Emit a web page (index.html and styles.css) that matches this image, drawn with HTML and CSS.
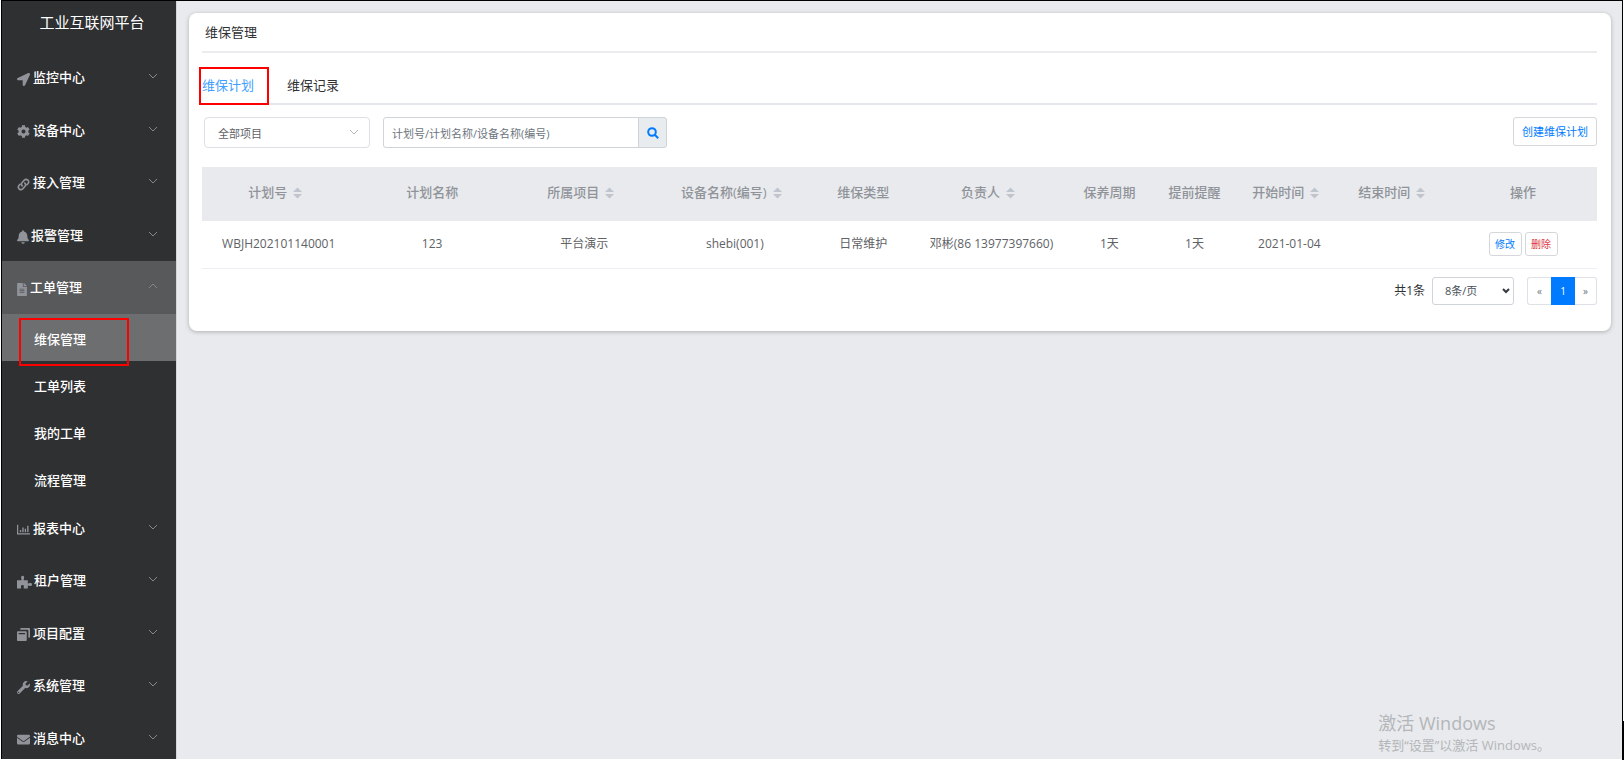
FILE: index.html
```html
<!DOCTYPE html>
<html lang="zh-CN">
<head>
<meta charset="utf-8">
<title>工业互联网平台</title>
<link rel="stylesheet" href="styles.css">
</head>
<body>
<svg class="defs" aria-hidden="true">
  <symbol id="chev" viewBox="0 0 10 6"><path d="M1 1l4 4 4-4" fill="none" stroke="currentColor"/></symbol>
  <symbol id="sort" viewBox="0 0 10 12"><path d="M5 0l5 5H0zM5 12l5-5H0z"/></symbol>
</svg>
<div class="app">
  <aside class="sidebar">
    <h1 class="brand">工业互联网平台</h1>
    <ul class="menu">
      <li class="item"><a class="link" href="#"><svg class="ico" viewBox="0 0 512 512"><path d="M445 4L29 195c-48 23-32 93 19 93h176v176c0 51 71 67 93 19L509 67c16-38-26-80-64-63z"/></svg>监控中心<svg class="chev"><use href="#chev"/></svg></a></li>
      <li class="item"><a class="link" href="#"><svg class="ico" viewBox="0 0 512 512"><path fill-rule="evenodd" d="M487 316l-42-25a192 192 0 0 0 0-70l42-25c5-3 7-9 6-14a248 248 0 0 0-55-95c-4-4-10-5-15-2l-43 24a190 190 0 0 0-61-35V25c0-6-4-11-9-12a251 251 0 0 0-110 0c-6 1-9 6-9 12v49a196 196 0 0 0-61 35L87 85c-5-3-11-2-15 2a247 247 0 0 0-55 95c-2 5 0 11 5 14l43 25a192 192 0 0 0 0 70l-43 25c-5 3-7 9-5 14 11 36 30 68 55 95 4 4 10 5 15 2l43-24a190 190 0 0 0 61 35v49c0 6 3 11 9 12 35 8 73 8 110 0 5-1 9-6 9-12v-49a196 196 0 0 0 61-35l43 24c5 3 11 2 15-2 25-27 44-60 55-95 1-5-1-11-6-14zM256 336a80 80 0 1 1 0-160 80 80 0 0 1 0 160z"/></svg>设备中心<svg class="chev"><use href="#chev"/></svg></a></li>
      <li class="item"><a class="link" href="#"><svg class="ico" viewBox="0 0 512 512"><g fill="none" stroke="currentColor" stroke-width="64" stroke-linecap="round"><path d="M206 312c-44-40-44-96-4-136l86-92c38-38 100-38 140 2s36 98 0 138l-40 42"/><path d="M306 200c44 40 44 96 4 136l-86 92c-38 38-100 38-140-2s-36-98 0-138l40-42"/></g></svg>接入管理<svg class="chev"><use href="#chev"/></svg></a></li>
      <li class="item"><a class="link" href="#"><svg class="ico narrow" viewBox="0 0 448 512"><path d="M224 512a64 64 0 0 0 64-64H160a64 64 0 0 0 64 64zm215-150c-19-20-55-52-55-154 0-78-54-140-128-155V32a32 32 0 1 0-64 0v21C118 68 64 130 64 208c0 102-36 134-55 154a31 31 0 0 0-9 22c0 16 13 32 32 32h384c19 0 32-16 32-32a31 31 0 0 0-9-22z"/></svg>报警管理<svg class="chev"><use href="#chev"/></svg></a></li>
      <li class="item open"><a class="link" href="#"><svg class="ico file" viewBox="0 0 384 512"><path fill-rule="evenodd" d="M224 136V0H24C11 0 0 11 0 24v464c0 13 11 24 24 24h336c13 0 24-11 24-24V160H248c-13 0-24-11-24-24zm64 248H96v-32h192zm0-64H96v-32h192zm0-64H96v-32h192zM384 122v6H256V0h6c6 0 12 3 17 7l98 98c4 5 7 11 7 17z"/></svg>工单管理<svg class="chev up"><use href="#chev"/></svg></a></li>
      <li class="subwrap">
        <ul class="submenu">
          <li><a class="sub current" href="#">维保管理<span class="mark"></span></a></li>
          <li><a class="sub" href="#">工单列表</a></li>
          <li><a class="sub" href="#">我的工单</a></li>
          <li><a class="sub" href="#">流程管理</a></li>
        </ul>
      </li>
      <li class="item"><a class="link" href="#"><svg class="ico" viewBox="0 0 512 512"><path d="M0 64h48v336h464v48H0zM112 272h54v90h-54zM208 176h54v186h-54zM304 224h54v138h-54zM400 112h54v250h-54z"/></svg>报表中心<svg class="chev"><use href="#chev"/></svg></a></li>
      <li class="item"><a class="link" href="#"><svg class="ico wide" viewBox="0 0 576 512"><path d="M0 190h150c24 0 34-18 22-40-30-60-10-130 44-130s74 70 44 130c-12 22-2 40 22 40h134v100c0 26 24 30 46 16 40-26 114-16 114 44s-74 72-114 46c-22-14-46-10-46 16v90H270c-18 0-20-20-10-40 20-44-2-88-52-88s-72 44-52 88c10 20 8 40-10 40H0z"/></svg>租户管理<svg class="chev"><use href="#chev"/></svg></a></li>
      <li class="item"><a class="link" href="#"><svg class="ico" viewBox="0 0 512 512"><path fill-rule="evenodd" d="M170 0h300c24 0 42 18 42 42v300c0 24-18 42-42 42h-22V106c0-24-18-42-42-42H128V42c0-24 18-42 42-42zM42 128h300c24 0 42 18 42 42v300c0 24-18 42-42 42H42c-24 0-42-18-42-42V170c0-24 18-42 42-42zm22 64v56h256v-56z"/></svg>项目配置<svg class="chev"><use href="#chev"/></svg></a></li>
      <li class="item"><a class="link" href="#"><svg class="ico" viewBox="0 0 512 512"><path fill-rule="evenodd" d="M507 109c-2-9-13-11-19-5l-75 74-68-11-11-68 75-74c6-6 3-17-5-20A144 144 0 0 0 232 190L19 403a64 64 0 0 0 90 90l213-213c110 28 214-64 185-171zM64 472a24 24 0 1 1 0-48 24 24 0 0 1 0 48z"/></svg>系统管理<svg class="chev"><use href="#chev"/></svg></a></li>
      <li class="item"><a class="link" href="#"><svg class="ico" viewBox="0 0 512 512"><path d="M502 191c4-3 10 0 10 5v204a48 48 0 0 1-48 48H48a48 48 0 0 1-48-48V196c0-5 6-8 10-5 22 18 52 40 155 114 21 16 57 48 91 48s71-33 91-48c103-74 133-96 155-114zM256 320c23 0 57-29 74-41 133-97 143-105 174-129 5-4 8-10 8-16v-22a48 48 0 0 0-48-48H48a48 48 0 0 0-48 48v22c0 6 3 12 8 16 31 24 41 32 174 129 17 12 51 41 74 41z"/></svg>消息中心<svg class="chev"><use href="#chev"/></svg></a></li>
    </ul>
  </aside>
  <main class="main">
    <section class="card">
      <h2 class="title">维保管理</h2>
      <nav class="tabs">
        <a class="tab active" href="#">维保计划<span class="mark"></span></a>
        <a class="tab" href="#">维保记录</a>
      </nav>
      <div class="tools">
        <button class="picker" type="button">全部项目<svg class="arrow"><use href="#chev"/></svg></button>
        <form class="search">
          <input class="query" type="text" aria-label="搜索" placeholder="计划号/计划名称/设备名称(编号)">
          <button class="go" type="button" aria-label="查询"><svg class="glass" viewBox="0 0 12 12"><circle cx="5" cy="5" r="3.8"/><path d="M7.8 7.8l3.4 3.4"/></svg></button>
        </form>
        <button class="btn create" type="button">创建维保计划</button>
      </div>
      <table class="grid">
        <colgroup><col class="c1"><col class="c2"><col class="c3"><col class="c4"><col class="c5"><col class="c6"><col class="c7"><col class="c8"><col class="c9"><col class="c10"><col class="c11"></colgroup>
        <thead>
          <tr>
            <th>计划号<svg class="sort"><use href="#sort"/></svg></th>
            <th>计划名称</th>
            <th>所属项目<svg class="sort"><use href="#sort"/></svg></th>
            <th>设备名称(编号)<svg class="sort"><use href="#sort"/></svg></th>
            <th>维保类型</th>
            <th>负责人<svg class="sort"><use href="#sort"/></svg></th>
            <th>保养周期</th>
            <th>提前提醒</th>
            <th>开始时间<svg class="sort"><use href="#sort"/></svg></th>
            <th>结束时间<svg class="sort"><use href="#sort"/></svg></th>
            <th>操作</th>
          </tr>
        </thead>
        <tbody>
          <tr>
            <td>WBJH202101140001</td><td>123</td><td>平台演示</td><td>shebi(001)</td><td>日常维护</td><td>邓彬(86 13977397660)</td><td>1天</td><td>1天</td><td>2021-01-04</td><td></td>
            <td><div class="ops"><button class="btn small" type="button">修改</button><button class="btn small danger" type="button">删除</button></div></td>
          </tr>
        </tbody>
      </table>
      <div class="pager">
        <label class="total" for="size">共1条</label>
        <div class="sizebox"><select class="size" id="size"><option>8条/页</option></select><svg class="down" viewBox="0 0 8 6"><path d="M1 1l3 3 3-3"/></svg></div>
        <div class="pages"><button class="page" type="button">«</button><button class="page on" type="button">1</button><button class="page" type="button">»</button></div>
      </div>
    </section>
    <div class="notice"><p class="big">激活 Windows</p><p class="line">转到“设置”以激活 Windows。</p></div>
  </main>
</div>
<div class="edge"></div>
</body>
</html>
```
FILE: styles.css
```css
* { box-sizing: border-box; }
body {
  margin: 0;
  background: #fff;
  color: #303133;
  font: 13px/20px "Open Sans", "Noto Sans CJK SC", sans-serif;
  overflow: hidden;
}
ul, h1, h2, p { margin: 0; padding: 0; list-style: none; font-weight: 400; }
a { color: inherit; text-decoration: none; }
button, input, select { font: inherit; color: inherit; margin: 0; }
.defs { position: absolute; width: 0; height: 0; }
.app {
  display: flex;
  height: calc(100vh - 1px);
  margin: 0 1px 1px;
  border: 1px solid #000;
  border-bottom: 0;
  overflow: hidden;
}
.edge { position: fixed; right: 0; bottom: 0; width: 2px; height: 39px; background: #000; }
.sidebar { flex: none; width: 174px; background: #2f3032; color: #fff; }
.brand { height: 50px; padding: 10px 0 0 6px; font-size: 15px; line-height: 22px; text-align: center; }
.menu { display: flex; flex-direction: column; height: calc(100vh - 47px); }
.item { flex: 1; display: flex; }
.link { flex: 1; display: flex; align-items: center; padding: 0 18px 0 15px; font-weight: 500; }
.open { background: #58595b; }
.ico { width: 13px; height: 13px; margin: 4px 3px 0 0; fill: #909399; color: #909399; }
.narrow { width: 12px; height: 14px; margin-right: 2px; }
.file { width: 10px; }
.wide { width: 15px; height: 14px; margin-right: 2px; }
.chev { width: 10px; height: 6px; margin: -2px 0 0 auto; color: #85878b; }
.up { transform: rotate(180deg); }
.sub { display: block; position: relative; height: 47px; padding-left: 32px; line-height: 50px; font-weight: 500; }
.current { background: #6d6e70; }
.mark { position: absolute; border: 2px solid #f00; pointer-events: none; }
.sub .mark { left: 17px; top: 4px; width: 110px; height: 48px; z-index: 1; }
.main { flex: 1; position: relative; min-width: 0; padding: 12px 11px 0 12px; background: #e8eaed; border-left: 1px solid #d4d5d8; }
.card { padding: 0 14px 26px 13px; background: #fff; border-radius: 8px; box-shadow: 0 1px 4px rgba(0, 0, 0, .25); }
.title { height: 40px; padding-left: 3px; border-bottom: 2px solid #ebecee; font-size: 13px; line-height: 38px; }
.tabs { display: flex; gap: 33px; height: 52px; border-bottom: 2px solid #e4e7ed; line-height: 64px; }
.tab { position: relative; }
.active { color: #409eff; }
.tab .mark { left: -3px; top: 14px; width: 70px; height: 38px; }
.tools { display: flex; gap: 13px; padding: 12px 0 19px 2px; font-size: 11px; }
.picker { display: flex; align-items: center; justify-content: space-between; width: 166px; height: 31px; padding: 2px 10px 0 13px; border: 1px solid #dcdfe6; border-radius: 4px; background: #fff; color: #606266; }
.arrow { width: 10px; height: 6px; margin-top: -4px; color: #b4b8c0; }
.search { display: flex; height: 31px; }
.query { width: 256px; padding: 2px 8px 0; border: 1px solid #ced4da; border-radius: 3px 0 0 3px; outline: 0; }
.query::placeholder { color: #6c757d; opacity: 1; }
.go { width: 29px; margin-left: -1px; padding: 0 0 2px; border: 1px solid #ced4da; border-radius: 0 3px 3px 0; background: #e9ecef; }
.glass { width: 12px; height: 12px; vertical-align: middle; fill: none; stroke: #007bff; stroke-width: 2; }
.btn { border: 1px solid #d5d7da; border-radius: 3px; background: #fff; color: #007bff; }
.create { width: 84px; height: 29px; margin-left: auto; padding: 0; }
.grid { width: 100%; table-layout: fixed; border-collapse: collapse; color: #606266; text-align: center; }
.grid th, .grid td { padding: 0; white-space: nowrap; }
.grid th { height: 54px; padding-bottom: 4px; background: #e8eaed; color: #909399; font-weight: 500; }
.grid td { height: 47px; border-bottom: 1px solid #ebeef5; font-size: 12px; }
.sort { width: 9px; height: 12px; margin: 0 7px -2px 6px; fill: #c0c4cc; }
.c1 { width: 11%; } .c2 { width: 11%; } .c3 { width: 10.8%; } .c4 { width: 10.8%; } .c5 { width: 7.6%; }
.c6 { width: 10.8%; } .c7 { width: 6.1%; } .c8 { width: 6.1%; } .c9 { width: 7.5%; } .c10 { width: 7.7%; } .c11 { width: 10.6%; }
.ops { display: flex; justify-content: center; gap: 3px; }
.small { width: 33px; height: 24px; padding: 0; font-size: 10px; line-height: 20px; }
.danger { color: #dc3545; }
.pager { display: flex; justify-content: flex-end; padding-top: 8px; font-size: 12px; }
.total { margin-right: 7px; line-height: 27px; }
.sizebox { position: relative; margin-right: 13px; }
.size { width: 82px; height: 28px; padding: 0 12px; border: 1px solid #ced4da; border-radius: 3px; background: #fff; color: #495057; font-size: 11px; appearance: none; }
.down { position: absolute; right: 4px; top: 11px; width: 8px; height: 6px; fill: none; stroke: #343a40; stroke-width: 2; }
.pages { display: flex; }
.page { width: 24px; height: 28px; padding: 0; border: 1px solid #dee2e6; background: #fff; color: #6c757d; font-size: 10px; }
.page:first-child { border-right: 0; border-radius: 3px 0 0 3px; }
.page:last-child { width: 22px; border-left: 0; border-radius: 0 3px 3px 0; }
.page.on { border-color: #007bff; background: #007bff; color: #fff; }
.notice { position: absolute; right: 72px; bottom: 4px; color: #b4b6b9; }
.big { font-size: 18px; line-height: 24px; }
.line { font-size: 13px; line-height: 20px; }
```
